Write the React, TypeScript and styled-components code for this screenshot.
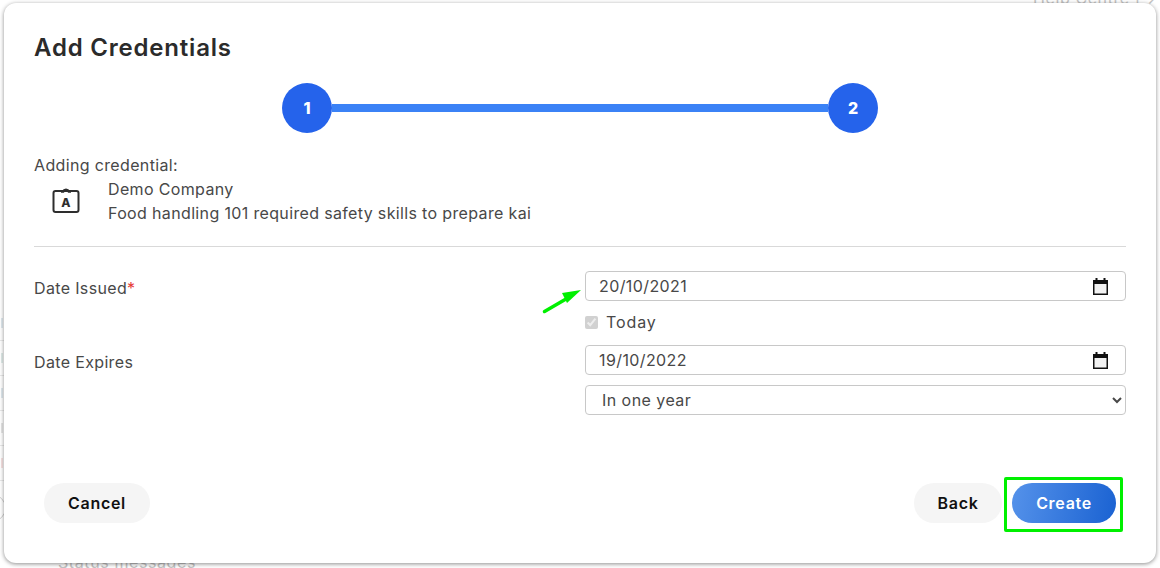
import React from 'react';
import styled, { createGlobalStyle } from 'styled-components';

const GlobalStyle = createGlobalStyle`
  html, body {
    margin: 0;
    padding: 0;
    height: 100%;
    background: #fff;
    overflow: hidden;
  }
  body {
    font-family: Inter, "Noto Sans", "Liberation Sans", sans-serif;
    color: #484848;
  }
`;

const Page = styled.div`
  position: relative;
  width: 1160px;
  height: 568px;
  padding: 3px 4px 5px;
  box-sizing: border-box;
  overflow: hidden;
`;

const FaintText = styled.div<{ $top: number; $left: number }>`
  position: absolute;
  top: ${p => p.$top}px;
  left: ${p => p.$left}px;
  font-size: 16px;
  letter-spacing: 0.6px;
  color: #c4c4c4;
  white-space: nowrap;
`;

const EdgeRows = styled.div`
  position: absolute;
  top: 306px;
  left: 0;
  width: 4px;
`;

const EdgeRow = styled.div<{ $mark: string }>`
  display: flex;
  align-items: center;
  height: 34px;
  border-bottom: 1px solid #e8e8e8;
  &::before {
    content: '';
    width: 2px;
    height: 10px;
    margin-left: 1px;
    background: ${p => p.$mark};
  }
`;

const EdgeCircle = styled.div`
  position: absolute;
  top: 494px;
  left: -22px;
  width: 26px;
  height: 26px;
  border: 1px solid #cfcfcf;
  border-radius: 50%;
`;

const Modal = styled.div`
  position: relative;
  display: flex;
  flex-direction: column;
  height: 560px;
  box-sizing: border-box;
  padding: 30px 30px 0;
  background: #fff;
  border-radius: 12px;
  box-shadow: 0 1px 4px rgba(0, 0, 0, 0.45);
`;

const Title = styled.h1`
  margin: 0;
  height: 30px;
  font-size: 24px;
  line-height: 30px;
  font-weight: 600;
  color: #2b2b2b;
  letter-spacing: 0.8px;
`;

const Stepper = styled.div`
  display: flex;
  align-items: center;
  width: 596px;
  margin: 20px auto 0;
`;

const StepCircle = styled.div`
  flex: none;
  display: flex;
  align-items: center;
  justify-content: center;
  width: 50px;
  height: 50px;
  border-radius: 50%;
  background: #2563eb;
  color: #fff;
  font-size: 16px;
  font-weight: 800;
`;

const StepLine = styled.div`
  flex: 1;
  height: 8px;
  background: #3b82f6;
`;

const Summary = styled.section`
  margin-top: 20px;
  padding-bottom: 21px;
  border-bottom: 1px solid #d9d9d9;
  font-size: 16px;
  line-height: 24px;
  letter-spacing: 0.35px;
`;

const SummaryBody = styled.div`
  display: flex;
  align-items: center;
`;

const IconSlot = styled.div`
  width: 74px;
  display: flex;
  padding: 0 0 2px 18px;
  box-sizing: border-box;
`;

const Form = styled.div`
  display: grid;
  grid-template-columns: 551px 541px;
  margin-top: 24px;
  font-size: 16px;
  letter-spacing: 0.35px;
`;

const Label = styled.div`
  line-height: 24px;
  padding-top: 5px;
`;

const Required = styled.span`
  color: #e53935;
`;

const FieldStack = styled.div<{ $gap: number; $bottom: number }>`
  display: flex;
  flex-direction: column;
  gap: ${p => p.$gap}px;
  margin-bottom: ${p => p.$bottom}px;
`;

const Field = styled.div`
  position: relative;
  display: flex;
  align-items: center;
  justify-content: space-between;
  height: 30px;
  box-sizing: border-box;
  padding: 0 17px 0 13px;
  border: 1px solid #c8c8c8;
  border-radius: 4px;
  letter-spacing: 0.4px;
`;

const Arrow = styled.svg`
  position: absolute;
  left: -44px;
  top: 15px;
`;

const CheckRow = styled.label`
  display: flex;
  align-items: center;
  height: 24px;
  letter-spacing: 0.9px;
`;

const Check = styled.input`
  margin: 0 8px 0 0;
  width: 13px;
  height: 13px;
`;

const Select = styled.select`
  height: 30px;
  width: 100%;
  box-sizing: border-box;
  padding: 0 8px 0 12px;
  background: #fff;
  border: 1px solid #c8c8c8;
  border-radius: 4px;
  font: inherit;
  letter-spacing: 0.45px;
  color: #484848;
`;

const Footer = styled.div`
  position: absolute;
  left: 40px;
  right: 33px;
  bottom: 40px;
  display: flex;
  align-items: center;
  justify-content: space-between;
`;

const FooterRight = styled.div`
  display: flex;
  align-items: center;
`;

const Button = styled.button<{ $primary?: boolean; $width: number }>`
  width: ${p => p.$width}px;
  height: 40px;
  padding: 0;
  border: none;
  border-radius: 20px;
  font-family: inherit;
  font-size: 16px;
  font-weight: 600;
  letter-spacing: 0.7px;
  color: ${p => (p.$primary ? '#fff' : '#111')};
  background: ${p => (p.$primary ? 'linear-gradient(100deg, #5592ea, #1a62d2)' : '#f5f5f5')};
`;

const Highlight = styled.div`
  display: flex;
  margin: -6px 0 -9px 2px;
  padding: 3px 4px 6px 5px;
  border: 3px solid #00f000;
  border-radius: 2px;
`;

const BadgeIcon = () => (
  <svg width="28" height="26" viewBox="0 0 28 26" fill="none" stroke="#2e2e2e" strokeWidth="2">
    <rect x="1.5" y="4" width="25" height="21" rx="2" />
    <path d="M9 4.5h2.2a3 3 0 0 1 5.6 0H19" strokeWidth="2.4" />
    <text x="14" y="20" fontSize="12" fontWeight="800" textAnchor="middle" fill="#2e2e2e" stroke="none">A</text>
  </svg>
);

const CalendarIcon = () => (
  <svg width="15" height="17" viewBox="0 0 15 17">
    <path d="M2.5 0h2v2h6V0h2v2H15v15H0V2h2.5z" fill="#111" />
    <rect x="1.5" y="6" width="12" height="9.5" fill="#f2f2f2" />
  </svg>
);

const App: React.FC = () => (
  <Page>
    <GlobalStyle />
    <FaintText $top={-12} $left={1033}>Help Centre [→</FaintText>
    <FaintText $top={552} $left={58}>Status messages</FaintText>
    <EdgeRows>
      <EdgeRow $mark="#e0e9ef" />
      <EdgeRow $mark="#e0ebe9" />
      <EdgeRow $mark="#e0e9ef" />
      <EdgeRow $mark="#e6e6e6" />
      <EdgeRow $mark="#f7e2e2" />
    </EdgeRows>
    <EdgeCircle />
    <Modal>
      <Title>Add Credentials</Title>
      <Stepper>
        <StepCircle>1</StepCircle>
        <StepLine />
        <StepCircle>2</StepCircle>
      </Stepper>
      <Summary>
        <div>Adding credential:</div>
        <SummaryBody>
          <IconSlot><BadgeIcon /></IconSlot>
          <div>
            <div>Demo Company</div>
            <div>Food handling 101 required safety skills to prepare kai</div>
          </div>
        </SummaryBody>
      </Summary>
      <Form>
        <Label>Date Issued<Required>*</Required></Label>
        <FieldStack $gap={9} $bottom={11}>
          <Field>
            <Arrow width="42" height="28" viewBox="0 0 42 28">
              <path d="M2.5 24.5L24 12" stroke="#00f000" strokeWidth="3.5" strokeLinecap="round" />
              <path d="M39 3L20 6L25 16z" fill="#00f000" />
            </Arrow>
            20/10/2021
            <CalendarIcon />
          </Field>
          <CheckRow><Check type="checkbox" checked disabled readOnly />Today</CheckRow>
        </FieldStack>
        <Label>Date Expires</Label>
        <FieldStack $gap={10} $bottom={0}>
          <Field>
            19/10/2022
            <CalendarIcon />
          </Field>
          <Select defaultValue="year">
            <option value="year">In one year</option>
          </Select>
        </FieldStack>
      </Form>
      <Footer>
        <Button $width={106}>Cancel</Button>
        <FooterRight>
          <Button $width={88}>Back</Button>
          <Highlight>
            <Button $primary $width={104}>Create</Button>
          </Highlight>
        </FooterRight>
      </Footer>
    </Modal>
  </Page>
);

export default App;
